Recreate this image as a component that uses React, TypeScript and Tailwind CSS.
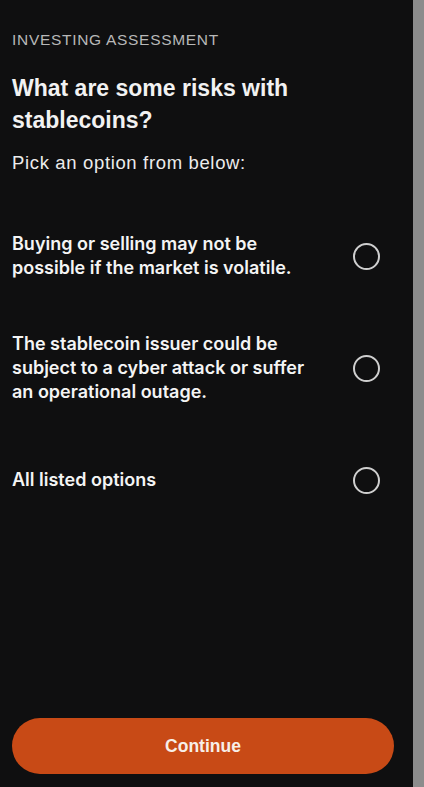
import React, { useState } from "react";

const options = [
  "Buying or selling may not be possible if the market is volatile.",
  "The stablecoin issuer could be subject to a cyber attack or suffer an operational outage.",
  "All listed options",
];

// ======= Radio option row =======
const OptionRow = ({ label, selected, onSelect }: { label: string; selected: boolean; onSelect: () => void }) => (
  <button
    onClick={onSelect}
    className="flex h-[112px] w-full items-center justify-between text-left"
  >
    <span className="w-[310px] text-[18px] leading-[24px] font-semibold text-[#f4f4f4] font-['Inter',sans-serif]">
      {label}
    </span>
    <span className="mr-[33px] flex h-[27px] w-[27px] items-center justify-center rounded-full border-2 border-[#cfcfcf]">
      {selected && <span className="h-[13px] w-[13px] rounded-full bg-[#cfcfcf]" />}
    </span>
  </button>
);

export default function App() {
  const [picked, setPicked] = useState<number | null>(null);

  return (
    <div className="flex h-[787px] w-[424px] bg-[#8c8c8c]">
      <div className="flex h-full w-[413px] flex-col bg-[#0f0f10] pl-3 font-['Liberation_Sans',Arial,sans-serif]">
        <p className="pt-[30px] text-[15.5px] leading-[20px] tracking-[0.7px] text-[#b8b8b8]">INVESTING ASSESSMENT</p>

        <h1 className="mt-[22px] text-[23px] leading-[32px] font-bold text-[#f2f2f2]">
          What are some risks with
          <br />
          stablecoins?
        </h1>

        <p className="mt-[15px] text-[18.5px] leading-[24px] tracking-[0.65px] text-[#ececec]">Pick an option from below:</p>

        {/* Answers */}
        <div className="mt-[25px] flex flex-col">
          {options.map((o, i) => (
            <OptionRow key={i} label={o} selected={picked === i} onSelect={() => setPicked(i)} />
          ))}
        </div>

        <button className="mt-auto mb-[13px] h-[56px] w-[382px] rounded-full bg-[#c84a16] text-[17.5px] font-bold text-[#f7efe9]">
          Continue
        </button>
      </div>
    </div>
  );
}
